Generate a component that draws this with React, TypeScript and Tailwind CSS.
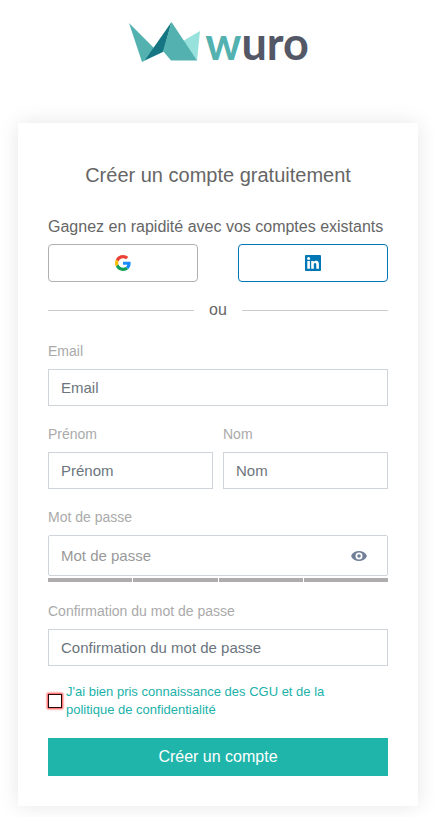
import type { InputHTMLAttributes } from 'react';

const labelClass = 'mb-2 block text-sm leading-5 text-[#aaaaaa]';
const inputClass =
  'h-[37px] w-full border border-[#ced4da] bg-white px-3 text-[15px] text-[#495057] placeholder:text-[#6c757d] outline-none focus:border-[#20b2aa]';

interface FieldProps extends InputHTMLAttributes<HTMLInputElement> {
  id: string;
  label: string;
}

function Field({ id, label, ...props }: FieldProps) {
  return (
    <div className="min-w-0 flex-1">
      <label htmlFor={id} className={labelClass}>{label}</label>
      <input id={id} name={id} placeholder={label} className={inputClass} {...props} />
    </div>
  );
}

function Logo() {
  return (
    <a href="#" aria-label="wuro" className="flex items-start justify-center gap-1">
      <svg width="74" height="44" viewBox="0 0 74 44" aria-hidden="true">
        <path d="M73 11 56 21 70 41Z" fill="#97e2dc" />
        <path d="M2 3 28 29 36 32 15 42Z" fill="#53b1b0" />
        <path d="M44.500 2 18 40 36.500 31.500Z" fill="#157582" />
        <path d="M44.500 2 36 31 44 40.500H70Z" fill="#53b1b0" />
      </svg>
      <span className="font-['Lato',sans-serif] text-[45px] leading-[46px] font-bold text-[#535766]">
        <span className="text-[#53b1b0]">w</span>uro
      </span>
    </a>
  );
}

function GoogleIcon() {
  return (
    <svg width="16" height="16" viewBox="0 0 48 48" aria-hidden="true">
      <path fill="#EA4335" d="M24 9.5c3.54 0 6.71 1.22 9.21 3.6l6.85-6.85C35.9 2.38 30.47 0 24 0 14.62 0 6.51 5.38 2.56 13.22l7.98 6.19C12.43 13.72 17.74 9.5 24 9.5z" />
      <path fill="#1a8cff" d="M46.98 24.55c0-1.57-.15-3.09-.38-4.55H24v9.02h12.94c-.58 2.96-2.26 5.48-4.78 7.18l7.73 6c4.51-4.18 7.09-10.36 7.09-17.65z" />
      <path fill="#FBBC05" d="M10.53 28.59A14.5 14.5 0 0 1 9.77 24c0-1.6.27-3.14.76-4.59l-7.98-6.19A23.9 23.9 0 0 0 0 24c0 3.88.92 7.54 2.56 10.78l7.97-6.19z" />
      <path fill="#0f9d58" d="M24 48c6.48 0 11.93-2.13 15.89-5.81l-7.73-6c-2.15 1.45-4.92 2.3-8.16 2.3-6.26 0-11.57-4.22-13.47-9.91l-7.98 6.19C6.51 42.62 14.62 48 24 48z" />
    </svg>
  );
}

function LinkedinIcon() {
  return (
    <svg width="16" height="16" viewBox="0 0 16 16" aria-hidden="true">
      <rect width="16" height="16" rx="1" fill="#0077b5" />
      <circle cx="3.6" cy="3.6" r="1.5" fill="#fff" />
      <path fill="#fff" d="M2.3 6h2.6v7.8H2.300zM6.200 6h2.500v1.100c.4-.7 1.200-1.300 2.400-1.300 2.200 0 2.800 1.500 2.800 3.500v4.500h-2.600V9.900c0-1 0-2-1.200-2s-1.300 1-1.300 1.900v4H6.200z" />
    </svg>
  );
}

function EyeIcon() {
  return (
    <svg width="16" height="16" viewBox="0 0 16 16" aria-hidden="true">
      <path fill="#718096" fillRule="evenodd" d="M0 8c1.400-3.200 4.400-5 8-5s6.600 1.800 8 5c-1.400 3.200-4.400 5-8 5s-6.600-1.800-8-5zm8 3.500a3.500 3.500 0 1 0 0-7 3.500 3.500 0 0 0 0 7z" />
      <circle cx="8" cy="8" r="1.800" fill="#718096" />
    </svg>
  );
}

export default function App() {
  return (
    <div className="bg-white pt-5 pr-4 pb-[11px] pl-[18px] font-['Liberation_Sans',Arial,sans-serif] text-[#666666]">
      <Logo />

      <main className="mx-auto mt-[57px] max-w-[400px] bg-white px-[30px] pt-10 pb-[30px] shadow-[0_0_20px_rgba(0,0,0,0.1)]">
        <h1 className="text-center text-xl leading-6">Créer un compte gratuitement</h1>

        <p className="mt-7 text-base leading-6">Gagnez en rapidité avec vos comptes existants</p>
        <div className="mt-[5px] flex justify-between gap-10">
          <button type="button" aria-label="Google" className="flex h-[38px] flex-1 items-center justify-center rounded border border-[#b0b0b0]">
            <GoogleIcon />
          </button>
          <button type="button" aria-label="LinkedIn" className="flex h-[38px] flex-1 items-center justify-center rounded border border-[#0077b5]">
            <LinkedinIcon />
          </button>
        </div>

        <div className="mt-4 flex items-center gap-[15px] leading-6">
          <span className="h-px flex-1 bg-[#cccccc]" />
          ou
          <span className="h-px flex-1 bg-[#cccccc]" />
        </div>

        <form className="mt-[19px] flex flex-col gap-[18px]" onSubmit={(e) => e.preventDefault()}>
          <Field id="email" label="Email" type="email" />

          <div className="flex gap-[10px]">
            <Field id="firstname" label="Prénom" />
            <Field id="lastname" label="Nom" />
          </div>

          <div>
            <label htmlFor="password" className={labelClass}>Mot de passe</label>
            <div className="flex h-[41px] items-center rounded-xs border border-[#ced4da] pr-5 pl-3">
              <input
                id="password"
                type="password"
                placeholder="Mot de passe"
                className="h-full min-w-0 flex-1 text-[15px] outline-none placeholder:text-[#999999]"
              />
              <button type="button" aria-label="Afficher le mot de passe">
                <EyeIcon />
              </button>
            </div>
            {/* password strength */}
            <div className="mt-[2px] grid h-1 grid-cols-4 gap-px">
              {[1, 2, 3, 4].map((n) => (
                <span key={n} className="bg-[#aeacac]" />
              ))}
            </div>
          </div>

          <div className="pt-px">
            <Field id="confirmation" label="Confirmation du mot de passe" type="password" />
          </div>

          <div className="-mt-px flex items-center gap-1 pb-px">
            <input
              id="terms"
              type="checkbox"
              className="h-[14px] w-[14px] shrink-0 appearance-none border border-[#2a0808] bg-white shadow-[0_0_2px_1px_#ff3b3b] checked:bg-[#20b2aa]"
            />
            <label htmlFor="terms" className="max-w-[280px] text-[13px] leading-[18px] text-[#20b2aa]">
              <a href="#">J'ai bien pris connaissance des CGU et de la politique de confidentialité</a>
            </label>
          </div>

          <button type="submit" className="h-[38px] w-full bg-[#20b5aa] text-base text-white">
            Créer un compte
          </button>
        </form>
      </main>
    </div>
  );
}
